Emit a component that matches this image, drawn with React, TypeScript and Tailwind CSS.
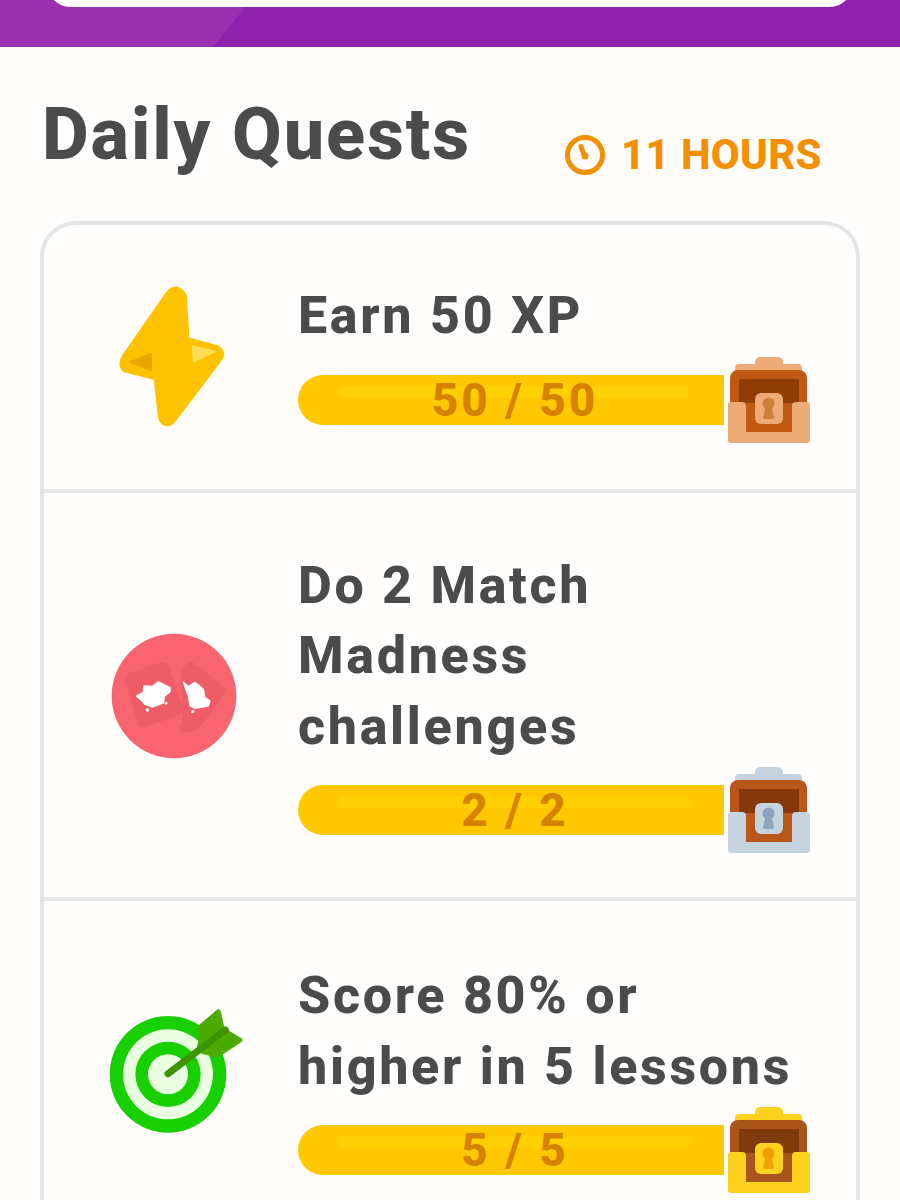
import React from "react";

type ChestColors = { shell: string; key: string; body: string; inner: string };

function Chest({ c }: { c: ChestColors }) {
  return (
    <svg width="84" height="86" viewBox="0 0 82 86" className="-my-[18px] ml-[3px] shrink-0">
      <rect x="27" y="0" width="28" height="14" rx="5" fill={c.shell} />
      <rect x="7" y="7" width="67" height="12" rx="4" fill={c.shell} />
      <rect x="2" y="13" width="77" height="64" rx="8" fill={c.body} />
      <rect x="11" y="22" width="60" height="24" fill={c.inner} />
      <path d="M3 45H14Q18 45 18 49V75H64V49Q64 45 68 45H79Q82 45 82 48V83Q82 86 79 86H3Q0 86 0 83V48Q0 45 3 45Z" fill={c.shell} />
      <rect x="27" y="36" width="28" height="31" rx="6" fill={c.shell} />
      <circle cx="40.5" cy="46.5" r="6" fill={c.key} />
      <path d="M38 49H43L46 60Q46 62 44 62H37Q35 62 35 60Z" fill={c.key} />
    </svg>
  );
}

function Bolt() {
  return (
    <svg width="160" height="170" viewBox="0 0 480 510">
      <path
        d="M245 70Q262 50 277 75L285 210L382 236Q392 245 385 255L245 440Q228 455 223 430L210 310L112 285Q105 275 112 262Z"
        fill="#ffc200"
        stroke="#ffc200"
        strokeWidth="34"
        strokeLinejoin="round"
      />
      <path d="M122 270L186 244L188 296Z" fill="#eba700" stroke="#eba700" strokeWidth="4" strokeLinejoin="round" />
      <path d="M310 222L380 238L314 270Z" fill="#ffdd55" stroke="#ffdd55" strokeWidth="4" strokeLinejoin="round" />
    </svg>
  );
}

function Cards() {
  return (
    <svg width="160" height="150" viewBox="0 0 480 450">
      <circle cx="237" cy="225" r="187" fill="#f9656e" />
      <path d="M105 155L200 124Q215 122 221 135L262 262Q262 278 250 282L150 318Q135 322 128 308L90 178Q90 160 105 155Z" fill="#ee5c67" />
      <path d="M258 150Q275 120 295 125L385 195Q396 205 388 218L330 300Q300 340 262 335Q240 330 262 310Z" fill="#ee5c67" />
      <path d="M125 225L145 215L147 195L172 197L190 183L225 200L225 212L208 225L205 245L172 258L150 250L140 238Z" fill="#fff" stroke="#fff" strokeWidth="5" strokeLinejoin="round" />
      <path d="M265 183L280 197L300 184L325 205L330 230L345 240L340 255L300 262L285 255L280 225Z" fill="#fff" stroke="#fff" strokeWidth="4" strokeLinejoin="round" />
      <circle cx="157" cy="267" r="5" fill="#fff" />
      <circle cx="213" cy="247" r="4" fill="#fff" />
      <circle cx="293" cy="272" r="5" fill="#fff" />
    </svg>
  );
}

function Target() {
  return (
    <svg width="160" height="145" viewBox="0 0 480 435">
      <circle cx="216" cy="235" r="175" fill="#18cf00" />
      <circle cx="216" cy="235" r="135" fill="#e9fde0" />
      <circle cx="216" cy="235" r="98" fill="#18cf00" />
      <circle cx="216" cy="235" r="60" fill="#e9fde0" />
      <path d="M305 90L365 40Q373 38 375 48L385 95L300 165Q312 125 305 90Z" fill="#4cab00" />
      <path d="M385 95L438 128Q442 134 436 138L365 185L322 175L300 165Z" fill="#4cab00" />
      <path d="M216 233L388 102" stroke="#3b9400" strokeWidth="21" strokeLinecap="round" />
    </svg>
  );
}

function Quest({
  title,
  progress,
  icon,
  iconClass,
  chest,
  className,
}: {
  title: React.ReactNode;
  progress: string;
  icon: React.ReactNode;
  iconClass: string;
  chest: ChestColors;
  className: string;
}) {
  return (
    <div className={`flex items-center ${className}`}>
      <div className="flex w-[254px] shrink-0 justify-center">
        <div className={iconClass}>{icon}</div>
      </div>
      <div className="flex-1 pr-[44px]">
        <div className="text-[52px] font-extrabold leading-[70.5px] tracking-[2.7px] text-[#4b4b4b]">{title}</div>
        <div className="mt-[23px] flex items-center">
          <div className="relative flex h-[50px] w-[426px] shrink-0 items-center justify-center rounded-l-[25px] bg-[#ffc800]">
            <div className="absolute left-[40px] right-[34px] top-[11px] h-[12px] rounded-full bg-[#ffd000]" />
            <span className="relative pl-[8px] text-[46px] font-extrabold leading-none tracking-[3px] text-[#d68100]">{progress}</span>
          </div>
          <Chest c={chest} />
        </div>
      </div>
    </div>
  );
}

export default function App() {
  return (
    <div className="h-[1200px] w-[900px] overflow-hidden bg-[#fffefd] [font-family:'Roboto',sans-serif]">
      <div className="relative h-[47px] overflow-hidden bg-[#8f22ad]">
        <svg width="260" height="47" viewBox="0 0 260 47" className="absolute left-0 top-0">
          <path d="M0 0H251L213 47H0Z" fill="#9a31b1" />
        </svg>
        <div className="relative mx-[48px] -mt-[33px] h-[40px] rounded-b-[22px] bg-white" />
      </div>

      <div className="flex items-start justify-between pl-[42px] pr-[78px] pt-[48px]">
        <h1 className="text-[72px] font-extrabold leading-[80px] tracking-[1.9px] text-[#4b4b4b]">Daily Quests</h1>
        <div className="mt-[39px] flex items-center gap-[15px] text-[#f49000]">
          <svg width="42" height="42" viewBox="0 0 42 42">
            <circle cx="21" cy="21" r="17.5" fill="none" stroke="#f49000" strokeWidth="5" />
            <path d="M17 12.5L20 21" stroke="#f49000" strokeWidth="5" strokeLinecap="round" />
            <circle cx="21" cy="22" r="3.5" fill="#f49000" />
          </svg>
          <span className="text-[42px] font-extrabold leading-none tracking-[0.3px]">11 HOURS</span>
        </div>
      </div>

      <div className="mx-[40px] mt-[45px] rounded-[36px] border-4 border-[#e5e5e5]">
        <Quest
          className="h-[268px] border-b-4 border-[#e5e5e5] pb-[8px]"
          title="Earn 50 XP"
          progress="50 / 50"
          icon={<Bolt />}
          iconClass="-ml-[4px] mt-[8px]"
          chest={{ shell: "#eeab78", key: "#cf8038", body: "#c05a13", inner: "#8f3c05" }}
        />
        <Quest
          className="h-[408px] border-b-4 border-[#e5e5e5] pb-[4px]"
          title={<>Do 2 Match<br />Madness<br />challenges</>}
          progress="2 / 2"
          icon={<Cards />}
          iconClass="ml-[8px] mt-[6px]"
          chest={{ shell: "#c5d3df", key: "#8ba5bf", body: "#b9561a", inner: "#85380a" }}
        />
        <Quest
          className="h-[340px] pb-[6px]"
          title={<>Score 80% or<br />higher in 5 lessons</>}
          progress="5 / 5"
          icon={<Target />}
          iconClass="ml-[9px]"
          chest={{ shell: "#ffd11f", key: "#eda200", body: "#a8541b", inner: "#7f3a0a" }}
        />
      </div>
    </div>
  );
}
